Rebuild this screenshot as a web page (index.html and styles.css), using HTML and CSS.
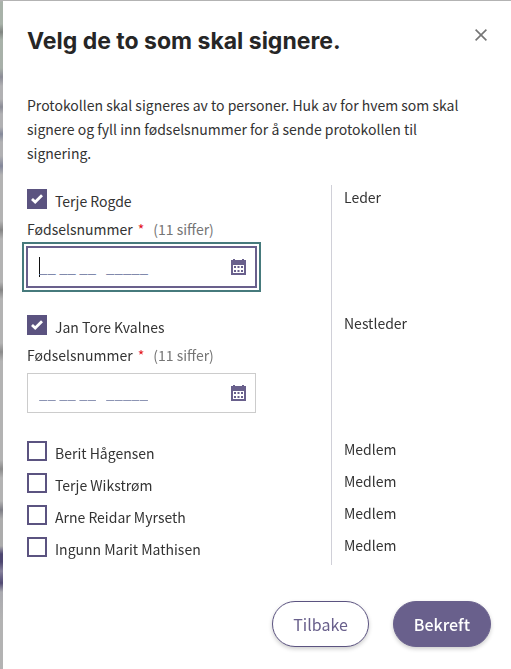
FILE: index.html
```html
<!DOCTYPE html>
<html lang="nb">
<head>
  <meta charset="UTF-8">
  <meta name="viewport" content="width=device-width, initial-scale=1.0">
  <title>Velg de to som skal signere</title>
  <link rel="stylesheet" href="styles.css">
</head>
<body>

  <form class="dialog" role="dialog" aria-labelledby="dialogTitle">
    <header class="dialog-header">
      <h1 id="dialogTitle">Velg de to som skal signere.</h1>
      <button class="close-button" type="button" aria-label="Lukk">
        <svg width="12" height="12" viewBox="0 0 12 12" fill="none" stroke="#757575" stroke-width="1.6">
          <path d="M0.6 0.6 L11.4 11.4 M11.4 0.6 L0.6 11.4"/>
        </svg>
      </button>
    </header>

    <p class="intro">Protokollen skal signeres av to personer. Huk av for hvem som skal signere og fyll inn fødselsnummer for å sende protokollen til signering.</p>

    <!-- Signers -->
    <div class="people">
      <div class="person selected">
        <div class="signer">
          <label class="name"><input type="checkbox" class="checkbox" checked> Terje Rogde</label>
          <label class="field-label" for="fnr1">Fødselsnummer <span class="required">*</span> <span class="hint">(11 siffer)</span></label>
          <div class="field">
            <input type="text" id="fnr1" inputmode="numeric" placeholder="__ __ __   _____" autofocus>
            <svg class="calendar" width="15" height="16" viewBox="0 0 15 16">
              <path fill="#69608c" fill-rule="evenodd" d="M2 0h2v1h7V0h2v1h2v15H0V1h2zM2 6v8h11V6z"/>
              <path fill="#69608c" d="M3 7h2v2H3zM6.500 7h2v2h-2zM10 7h2v2h-2zM3 11h2v2H3zM6.500 11h2v2h-2zM10 11h2v2h-2z"/>
            </svg>
          </div>
        </div>
        <div class="role">Leder</div>
      </div>

      <div class="person selected">
        <div class="signer">
          <label class="name"><input type="checkbox" class="checkbox" checked> Jan Tore Kvalnes</label>
          <label class="field-label" for="fnr2">Fødselsnummer <span class="required">*</span> <span class="hint">(11 siffer)</span></label>
          <div class="field">
            <input type="text" id="fnr2" inputmode="numeric" placeholder="__ __ __   _____">
            <svg class="calendar" width="15" height="16" viewBox="0 0 15 16">
              <path fill="#69608c" fill-rule="evenodd" d="M2 0h2v1h7V0h2v1h2v15H0V1h2zM2 6v8h11V6z"/>
              <path fill="#69608c" d="M3 7h2v2H3zM6.500 7h2v2h-2zM10 7h2v2h-2zM3 11h2v2H3zM6.500 11h2v2h-2zM10 11h2v2h-2z"/>
            </svg>
          </div>
        </div>
        <div class="role">Nestleder</div>
      </div>

      <div class="person">
        <div class="signer">
          <label class="name"><input type="checkbox" class="checkbox"> Berit Hågensen</label>
        </div>
        <div class="role">Medlem</div>
      </div>
      <div class="person">
        <div class="signer">
          <label class="name"><input type="checkbox" class="checkbox"> Terje Wikstrøm</label>
        </div>
        <div class="role">Medlem</div>
      </div>
      <div class="person">
        <div class="signer">
          <label class="name"><input type="checkbox" class="checkbox"> Arne Reidar Myrseth</label>
        </div>
        <div class="role">Medlem</div>
      </div>
      <div class="person">
        <div class="signer">
          <label class="name"><input type="checkbox" class="checkbox"> Ingunn Marit Mathisen</label>
        </div>
        <div class="role">Medlem</div>
      </div>
    </div>

    <footer class="actions">
      <button class="button" type="button">Tilbake</button>
      <button class="button primary" type="button">Bekreft</button>
    </footer>
  </form>

</body>
</html>
```
FILE: styles.css
```css
* {
  margin: 0;
  padding: 0;
  box-sizing: border-box;
}

/* Dimmed page behind the dialog */
body {
  min-height: 100vh;
  padding: 1px 0 0 3px;
  display: flex;
  font-family: "Noto Sans CJK SC", "Noto Sans", sans-serif;
  font-size: 14px;
  line-height: 24px;
  color: #333;
  background: linear-gradient(
    #b3b3b3 1px, #a8b2a9 2px, #a8b2a9 24px, #808581 32px, #a8b2a9 40px,
    #a8b0a9 68px, #8b8c96 77px, #b1b1b3 86px, #b1b1b3 99px, #8b8c96 107px,
    #b1b1b3 114px, #b1b1b3 127px, #85899a 134px, #b1b1b3 142px, #b1b1b3 156px,
    #83879a 166px, #b3b3b3 175px, #b3b3b3 221px, #858585 230px, #b3b3b3 239px,
    #b3b3b3 282px, #858585 290px, #b3b3b3 299px, #b3b3b3 343px, #8b8b8b 352px,
    #b3b3b3 361px, #b3b3b3 460px, #8b8b8b 469px, #b3b3b3 478px, #b3b3b3 501px,
    #7d7d85 510px, #acacac 519px, #acacac 546px, #4d4670 554px, #4d4670 562px,
    #85819b 571px, #514a73 583px, #aaaaaf 592px, #b3b3b3 620px
  );
}

.dialog {
  flex: 1;
  padding: 24px 20px 22px 24px;
  background-color: #fff;
}

.dialog-header {
  display: flex;
  justify-content: space-between;
  align-items: flex-start;
  margin-bottom: 36px;
}

h1 {
  font-family: Inter, sans-serif;
  font-size: 23px;
  line-height: 32px;
  font-weight: 700;
  color: #262626;
}

.close-button {
  display: flex;
  padding: 4px;
  border: none;
  background: none;
  cursor: pointer;
}

.intro {
  margin-bottom: 20px;
  padding-right: 20px;
}

/* List of people */
.person {
  display: grid;
  grid-template-columns: 1fr 159px;
}

.signer {
  display: flex;
  flex-direction: column;
  align-items: flex-start;
  padding: 4px 0;
  border-right: 1px solid #d0d0d8;
}

.selected .signer {
  padding-bottom: 24px;
}

.role {
  padding-left: 12px;
}

.name {
  display: flex;
  gap: 8px;
  height: 24px;
  cursor: pointer;
}

.checkbox {
  appearance: none;
  width: 20px;
  height: 20px;
  border: 2px solid #5b5380;
  cursor: pointer;
}

.checkbox:checked {
  background: #5b5380 url("data:image/svg+xml,%3Csvg xmlns='http://www.w3.org/2000/svg' width='12' height='10' fill='none' stroke='white' stroke-width='2.800'%3E%3Cpath d='M1 5l3.200 3L11 1.200'/%3E%3C/svg%3E") center no-repeat;
}

.field-label {
  display: flex;
  gap: 5px;
  margin: 4px 0 6px;
}

.required {
  color: #e3141e;
}

.hint {
  margin-left: 4px;
  color: #757575;
}

.field {
  display: flex;
  align-items: center;
  width: 100%;
  max-width: 229px;
  height: 40px;
  padding: 0 9px 0 11px;
  border: 1px solid #ccc;
}

.field:focus-within {
  border-color: #69608c;
  box-shadow: 0 0 0 1px #69608c, 0 0 0 3px #fff, 0 0 0 5px #467a7c;
}

.field input {
  flex: 1;
  min-width: 0;
  height: 20px;
  border: none;
  outline: none;
  background: none;
  font: inherit;
  font-size: 15px;
  color: #333;
}

.field input::placeholder {
  color: #8189ac;
  opacity: 1;
}

/* Steady caret while the field is empty */
.field input:focus:placeholder-shown {
  background: linear-gradient(#111, #111) left / 1px 100% no-repeat;
  caret-color: transparent;
}

.calendar {
  flex: none;
}

/* Buttons */
.actions {
  display: flex;
  justify-content: flex-end;
  gap: 24px;
  margin-top: 36px;
}

.button {
  height: 46px;
  padding: 0 20px;
  border: 1px solid #5b5380;
  border-radius: 23px;
  background-color: #fff;
  color: #69608c;
  font-family: inherit;
  font-size: 16px;
  line-height: 24px;
  box-shadow: 0 2px 4px rgba(0, 0, 0, 0.2);
  cursor: pointer;
}

.button.primary {
  border-color: #69608c;
  background-color: #69608c;
  color: #fff;
  font-weight: 500;
}
```
